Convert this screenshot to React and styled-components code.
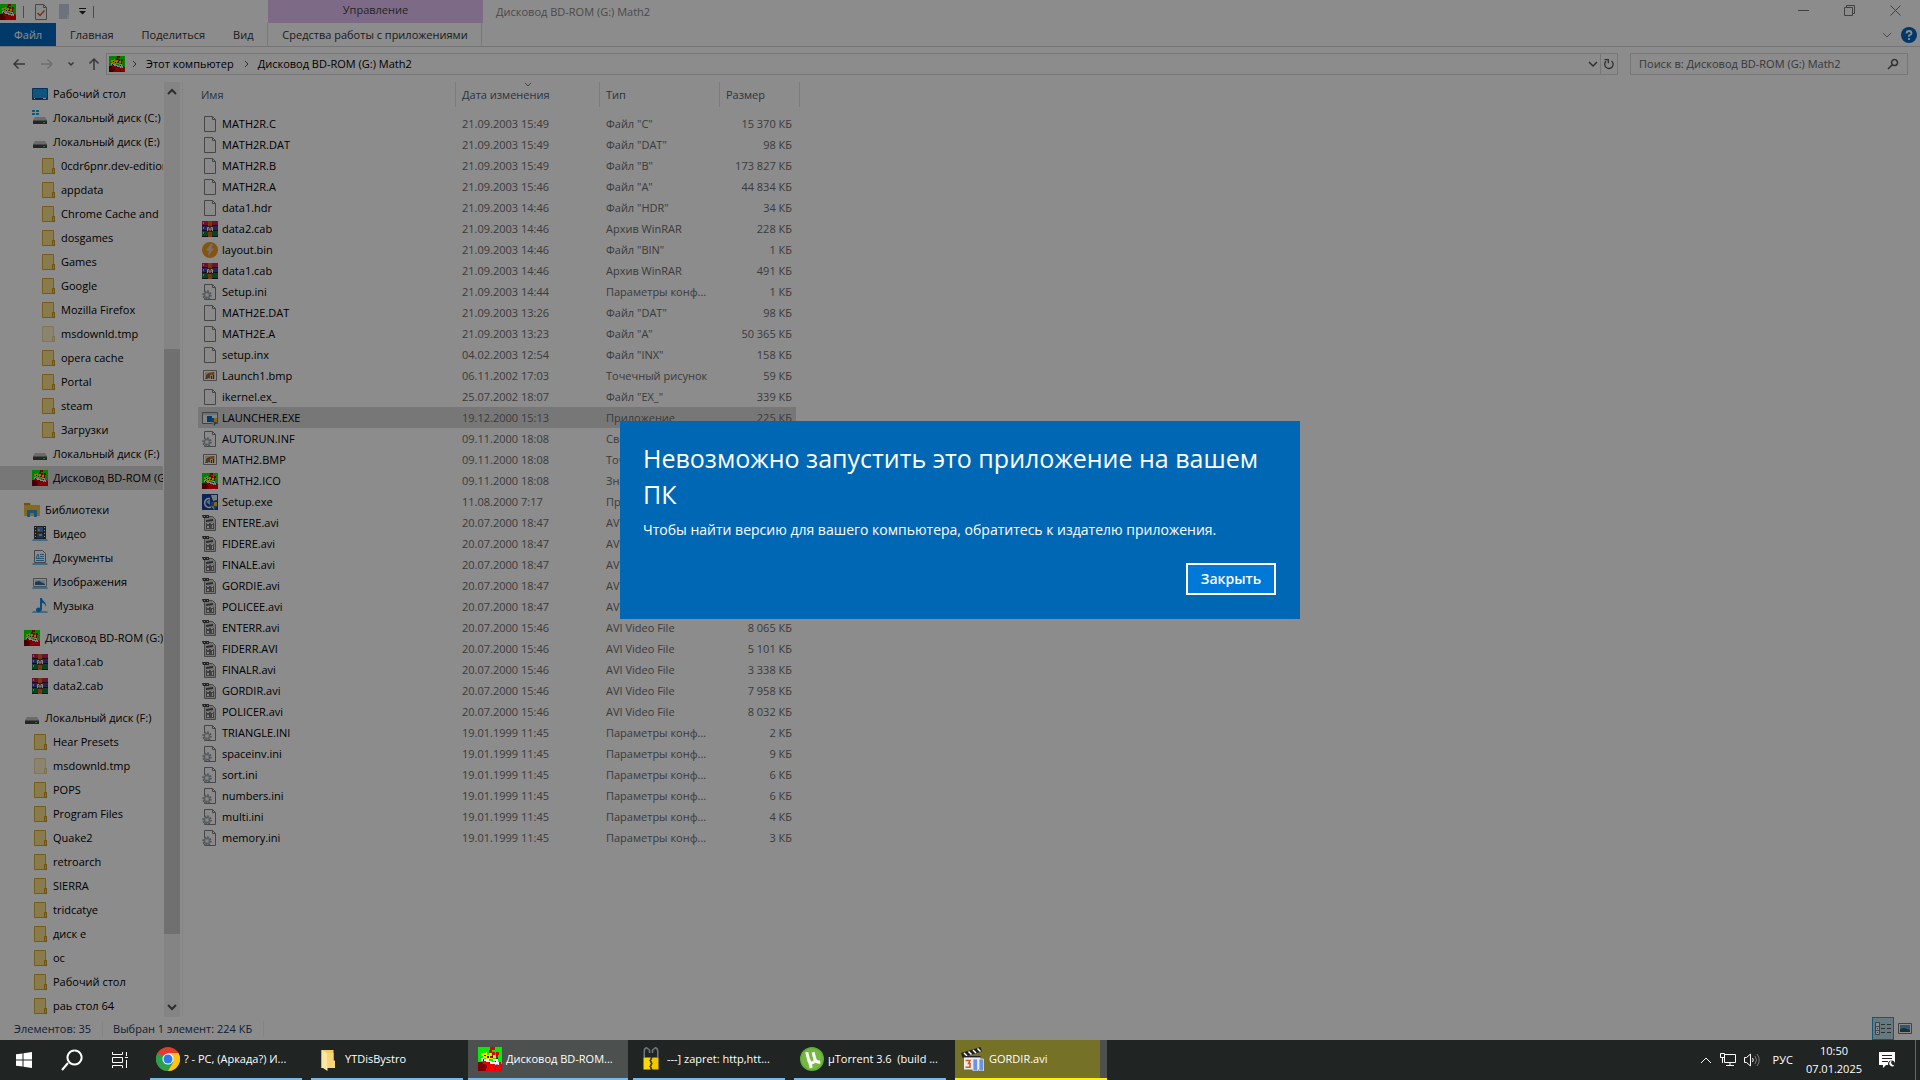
import React, { useState } from "react";
import styled, { createGlobalStyle, css } from "styled-components";

const files = [
  ["MATH2R.C", "21.09.2003 15:49", 'Файл "C"', "15 370 КБ", "file"],
  ["MATH2R.DAT", "21.09.2003 15:49", 'Файл "DAT"', "98 КБ", "file"],
  ["MATH2R.B", "21.09.2003 15:49", 'Файл "B"', "173 827 КБ", "file"],
  ["MATH2R.A", "21.09.2003 15:46", 'Файл "A"', "44 834 КБ", "file"],
  ["data1.hdr", "21.09.2003 14:46", 'Файл "HDR"', "34 КБ", "file"],
  ["data2.cab", "21.09.2003 14:46", "Архив WinRAR", "228 КБ", "rar"],
  ["layout.bin", "21.09.2003 14:46", 'Файл "BIN"', "1 КБ", "bolt"],
  ["data1.cab", "21.09.2003 14:46", "Архив WinRAR", "491 КБ", "rar"],
  ["Setup.ini", "21.09.2003 14:44", "Параметры конф...", "1 КБ", "ini"],
  ["MATH2E.DAT", "21.09.2003 13:26", 'Файл "DAT"', "98 КБ", "file"],
  ["MATH2E.A", "21.09.2003 13:23", 'Файл "A"', "50 365 КБ", "file"],
  ["setup.inx", "04.02.2003 12:54", 'Файл "INX"', "158 КБ", "file"],
  ["Launch1.bmp", "06.11.2002 17:03", "Точечный рисунок", "59 КБ", "bmp"],
  ["ikernel.ex_", "25.07.2002 18:07", 'Файл "EX_"', "339 КБ", "file"],
  ["LAUNCHER.EXE", "19.12.2000 15:13", "Приложение", "225 КБ", "exe"],
  ["AUTORUN.INF", "09.11.2000 18:08", "Сведения для уст...", "1 КБ", "ini"],
  ["MATH2.BMP", "09.11.2000 18:08", "Точечный рисунок", "59 КБ", "bmp"],
  ["MATH2.ICO", "09.11.2000 18:08", "Значок", "1 КБ", "math"],
  ["Setup.exe", "11.08.2000 7:17", "Приложение", "72 КБ", "setup"],
  ["ENTERE.avi", "20.07.2000 18:47", "AVI Video File", "8 065 КБ", "avi"],
  ["FIDERE.avi", "20.07.2000 18:47", "AVI Video File", "5 101 КБ", "avi"],
  ["FINALE.avi", "20.07.2000 18:47", "AVI Video File", "3 338 КБ", "avi"],
  ["GORDIE.avi", "20.07.2000 18:47", "AVI Video File", "7 958 КБ", "avi"],
  ["POLICEE.avi", "20.07.2000 18:47", "AVI Video File", "8 032 КБ", "avi"],
  ["ENTERR.avi", "20.07.2000 15:46", "AVI Video File", "8 065 КБ", "avi"],
  ["FIDERR.AVI", "20.07.2000 15:46", "AVI Video File", "5 101 КБ", "avi"],
  ["FINALR.avi", "20.07.2000 15:46", "AVI Video File", "3 338 КБ", "avi"],
  ["GORDIR.avi", "20.07.2000 15:46", "AVI Video File", "7 958 КБ", "avi"],
  ["POLICER.avi", "20.07.2000 15:46", "AVI Video File", "8 032 КБ", "avi"],
  ["TRIANGLE.INI", "19.01.1999 11:45", "Параметры конф...", "2 КБ", "ini"],
  ["spaceinv.ini", "19.01.1999 11:45", "Параметры конф...", "9 КБ", "ini"],
  ["sort.ini", "19.01.1999 11:45", "Параметры конф...", "6 КБ", "ini"],
  ["numbers.ini", "19.01.1999 11:45", "Параметры конф...", "6 КБ", "ini"],
  ["multi.ini", "19.01.1999 11:45", "Параметры конф...", "4 КБ", "ini"],
  ["memory.ini", "19.01.1999 11:45", "Параметры конф...", "3 КБ", "ini"],
];

// [label, icon, indent, current]
const tree = [
  [
    ["Рабочий стол", "desktop", 32],
    ["Локальный диск (C:)", "sysdrive", 32],
    ["Локальный диск (E:)", "drive", 32],
    ["0cdr6pnr.dev-edition", "folder", 40],
    ["appdata", "folder", 40],
    ["Chrome Cache and", "folder", 40],
    ["dosgames", "folder", 40],
    ["Games", "folder", 40],
    ["Google", "folder", 40],
    ["Mozilla Firefox", "folder", 40],
    ["msdownld.tmp", "faded", 40],
    ["opera cache", "folder", 40],
    ["Portal", "folder", 40],
    ["steam", "folder", 40],
    ["Загрузки", "folder", 40],
    ["Локальный диск (F:)", "drive", 32],
    ["Дисковод BD-ROM (G:)", "math", 32, true],
  ],
  [
    ["Библиотеки", "library", 24],
    ["Видео", "video", 32],
    ["Документы", "docs", 32],
    ["Изображения", "pictures", 32],
    ["Музыка", "music", 32],
  ],
  [
    ["Дисковод BD-ROM (G:)", "math", 24],
    ["data1.cab", "rar", 32],
    ["data2.cab", "rar", 32],
  ],
  [
    ["Локальный диск (F:)", "drive", 24],
    ["Hear Presets", "folder", 32],
    ["msdownld.tmp", "faded", 32],
    ["POPS", "folder", 32],
    ["Program Files", "folder", 32],
    ["Quake2", "folder", 32],
    ["retroarch", "folder", 32],
    ["SIERRA", "folder", 32],
    ["tridcatye", "folder", 32],
    ["диск е", "folder", 32],
    ["ос", "folder", 32],
    ["Рабочий стол", "folder", 32],
    ["раь стол 64", "folder", 32],
  ],
];

const tasks = [
  { label: "? - PC, (Аркада?) И...", icon: "chrome" },
  { label: "YTDisBystro", icon: "taskfolder" },
  { label: "Дисковод BD-ROM...", icon: "math", active: true },
  { label: "---] zapret: http,htt...", icon: "lock" },
  { label: "µTorrent 3.6  (build ...", icon: "utorrent" },
  { label: "GORDIR.avi", icon: "player", alert: true },
];

const folderShape = (
  <>
    <path d="M2.500.5h11v10h1v5h-12z" fill="#fbe08a" stroke="#d9ab2b" />
    <path d="M12.500 15.500v-5h2v5z" fill="#f5cf62" stroke="#c7961c" />
  </>
);

const driveShape = (
  <>
    <path d="M3 7h10l2 3H1z" fill="#c4c4c4" />
    <path d="M1 10h14v4H1z" fill="#444" />
    <path d="M1 10h14v1H1z" fill="#888" />
    <path d="M11 12h2v1h-2z" fill="#3ee04a" />
  </>
);

const pageShape = (
  <path
    d="M2.500.5h8l3 3v12h-11zM10.500.5v3h3"
    fill="#fbfbfb"
    stroke="#808080"
  />
);

const shapes = {
  folder: folderShape,
  faded: <g opacity="0.45">{folderShape}</g>,
  drive: driveShape,
  sysdrive: (
    <>
      {driveShape}
      <path d="M0 0h3v2H0zM4 0h3v2H4zM0 3h3v2H0zM4 3h3v2H4z" fill="#00adef" />
    </>
  ),
  file: pageShape,
  desktop: (
    <>
      <path d="M.5 2.500h15v11H.5z" fill="#1e9be9" stroke="#0a5c9c" />
      <path d="M1 12h14v1H1z" fill="#0b4a80" />
      <path d="M2 12h1v1H2zM11 12h3v1h-3z" fill="#fff" />
    </>
  ),
  math: (
    <g shapeRendering="crispEdges">
      <path d="M0 0h16v16H0z" fill="#00f000" />
      <path d="M1 10h2V9h4v1h4v1h3v-1h1v1h1v5H0v-5h1z" fill="#f00000" />
      <path d="M0 10h3v1h2v1h1v2H5v2H0z" fill="#7c0000" />
      <path d="M8 0h3v2H9v1h2v2h1V3h2v2h-1v2H8V5H7V2h1z" fill="#c80c00" />
      <path d="M2 4h3V3h1v2h2v2h2v1H5V7H3V6H2zM10 5h2v2h-2zM7 4h2v2H7z" fill="#ffe000" />
      <path d="M2 7h2v1h3v1h3v-1h3v2h1v2h-3v-1H8v-1H5V9H2z" fill="#f4f4f4" />
      <path d="M4 5h1v1H4zM6 6h1v1H6zM9 6h1v1H9zM12 7h1v1h-1zM3 8h1v1H3zM7 10h1v1H7zM11 9h1v1h-1z" fill="#222" />
      <path d="M9 9h2v1H9zM12 11h1v1h-1z" fill="#38bce8" />
      <path d="M11 13h1v3h-1z" fill="#9c0000" />
    </g>
  ),
  rar: (
    <>
      <path d="M0 0h16v5H0z" fill="#c5214f" />
      <path d="M0 5h16v5H0z" fill="#4a3fa8" />
      <path d="M0 10h16v6H0z" fill="#107a3c" />
      <path d="M0 4h16v1H0zM0 9h16v1H0zM0 15h16v1H0z" fill="#2b1830" />
      <path d="M6 0h4v16H6z" fill="#d9661c" />
      <path d="M5 5h6v6H5z" fill="#6a2c18" />
      <path d="M5.500 10V6.500h1.500V9h2V6.500h1.500V10" fill="none" stroke="#fff" />
      <path d="M1 1h1v2H1zM1 6h1v2H1zM1 11h1v2H1z" fill="#f0c040" />
    </>
  ),
  bolt: (
    <>
      <circle cx="8" cy="8" r="8" fill="#f39a1e" />
      <path d="M9 1.500L4 8.500h3l-1 5.500 6-7.500H9l2-4z" fill="#d8d0c4" />
    </>
  ),
  ini: (
    <>
      {pageShape}
      <circle cx="5" cy="11" r="4" fill="#e4e6e8" stroke="#8c969c" strokeWidth="1.500" strokeDasharray="1.600 1.500" />
      <circle cx="5" cy="11" r="2.800" fill="#d4d9dc" stroke="#98a0a6" />
      <circle cx="5" cy="11" r="1" fill="#fff" />
    </>
  ),
  bmp: (
    <>
      <path d="M1.500 2.500h13v10h-13z" fill="#fff" stroke="#858585" />
      <path d="M3 4h10v7H3z" fill="#d8d2c0" />
      <path d="M4 7l3-2 5-1v3z" fill="#c8571e" />
      <path d="M4 7h4v3H4z" fill="#94683f" />
      <path d="M8 5h4v2H8z" fill="#dc782a" />
      <path d="M9 8h1v3H9zM11 7h1v4h-1z" fill="#5a3c28" />
      <path d="M3 10h3v1H3z" fill="#5c9440" />
    </>
  ),
  exe: (
    <>
      <path d="M.5 2.500h15v11H.5z" fill="#eef3f7" stroke="#777" />
      <path d="M1 3h14v2H1z" fill="#c5ced6" />
      <path d="M5 6h5v6H5z" fill="#0a66c4" />
      <path d="M9 8h6v4l-3 4-3-4z" fill="#f2bb22" />
      <path d="M9 8h3v4H9zM12 12h3l-3 4z" fill="#1c6fd0" />
    </>
  ),
  setup: (
    <>
      <path d="M0 0h16v16H0z" fill="#17409c" />
      <path d="M9 1h6v5l-4 1z" fill="#d5e2f0" />
      <path d="M8 4.500A4.500 4.500 0 1 0 9 13" fill="none" stroke="#e8f1ff" strokeWidth="1.500" />
      <path d="M4 8l4-3v6z" fill="#9fc0ee" />
      <path d="M9 8h6v4l-3 4-3-4z" fill="#f2bb22" />
      <path d="M9 8h3v4H9zM12 12h3l-3 4z" fill="#1c6fd0" />
    </>
  ),
  avi: (
    <>
      <path d="M2.500 1.500h8l3 3v11h-11z" fill="#d4d4d4" stroke="#808080" />
      <path d="M0 0h7v3H1z" fill="#444" />
      <path d="M2 1h1v1H2zM5 1h1v1H5z" fill="#ddd" />
      <path d="M4 5l7-1v2l-7 1z" fill="#555" />
      <path d="M4 8h8v6H4z" fill="#777" />
      <path d="M5 8h2v1H5zM9 8h2v1H9zM5 11h2v2H5zM10 10h1v3h-1z" fill="#f2f2f2" />
      <path d="M7 9h1v3H7z" fill="#c44" />
      <path d="M9 11h1v3H9z" fill="#4a4" />
      <path d="M11 11h1v3h-1z" fill="#47d" />
    </>
  ),
  library: (
    <>
      <path d="M0 1h6l1 2h9v11H0z" fill="#f2bf3d" />
      <path d="M0 1h6v2H0z" fill="#c8941f" />
      <path d="M3 15V8h10v7h-3v-4H6v4z" fill="#3498db" />
    </>
  ),
  video: (
    <>
      <path d="M2 0h12v13H2z" fill="#36393e" />
      <path d="M5 1h6v5H5z" fill="#3f7ed0" />
      <path d="M5 7h6v5H5z" fill="#2f5fa5" />
      <path d="M6 3h2v2H6zM7 8h3v2H7z" fill="#e0a82c" />
      <path d="M3 1h1v1H3zM3 4h1v1H3zM3 7h1v1H3zM3 10h1v1H3zM12 1h1v1h-1zM12 4h1v1h-1zM12 7h1v1h-1zM12 10h1v1h-1z" fill="#fff" />
      <path d="M1 13h14l1 2H0z" fill="#79c2ee" />
    </>
  ),
  docs: (
    <>
      <path d="M2.500.5h8l3 3v9h-11z" fill="#fff" stroke="#808080" />
      <path d="M4 8l2-4 1 4M8 4.500h4M8 6.500h4M4 8.500h8M4 10.500h8" fill="none" stroke="#4696cf" />
      <path d="M1 13h14l1 2H0z" fill="#79c2ee" />
    </>
  ),
  pictures: (
    <>
      <path d="M1.500 4.500h13v8h-13z" fill="#fff" stroke="#8a8a8a" />
      <path d="M3 6h10v5H3z" fill="#bfe0f4" />
      <path d="M3 8l4-1 6 3v1H3z" fill="#2f6d96" />
      <path d="M1 13h14l1 2H0z" fill="#79c2ee" />
    </>
  ),
  music: (
    <>
      <path d="M1 13h14l1 2H0z" fill="#79c2ee" />
      <path d="M8 0h2c0 3 5 4 4 9-1-3-2-4-4-4v6c0 4-6 4-6 1 0-2 2-3 4-2z" fill="#1587dd" />
    </>
  ),
  chrome: (
    <>
      <circle cx="8" cy="8" r="8" fill="#e33b2e" />
      <path d="M1.070 4A8 8 0 0 0 8 16l3.500-6z" fill="#2aa14c" />
      <path d="M8 16A8 8 0 0 0 14.930 4H8l3.500 6z" fill="#fdc50f" />
      <circle cx="8" cy="8" r="3.700" fill="#fff" />
      <circle cx="8" cy="8" r="3" fill="#2f78ee" />
    </>
  ),
  taskfolder: (
    <>
      <path d="M3 2h8v12H3z" fill="#f3cb63" />
      <path d="M3 2l4 2v12l-3-2H3z" fill="#fbe6a2" />
      <path d="M7 4h4v5h1v5H7z" fill="#f8d675" />
    </>
  ),
  lock: (
    <>
      <path d="M3.500 7V3q0-2 1.500-2.500L7 2v2M12.500 7V3q0-2-1.500-2.500L9 2v2" fill="none" stroke="#6f7880" />
      <path d="M3 7h5l-1 2 1 2-1 2 1 2H3z" fill="#fcd800" />
      <path d="M13 7H9L8 9l1 2-1 2 1 2h4z" fill="#f1c800" />
      <path d="M8.500 7l-1 2 1 2-1 2 1 2" fill="none" stroke="#4a3b00" />
    </>
  ),
  utorrent: (
    <>
      <circle cx="8" cy="8" r="8" fill="#5fae3c" />
      <circle cx="8" cy="8" r="7" fill="#76b83f" />
      <path d="M4.500 3.500l1.500 6q.5 1.500 2.200 1T10 8.500l-1.300-5M10 8q.5 2.500 3.500 2M6 8.500L7.500 14" fill="none" stroke="#fff" strokeWidth="2" />
    </>
  ),
  player: (
    <>
      <path d="M0 4l13-4 1 3-13 4z" fill="#222" />
      <path d="M2 4l2 2M5 3l2 2M8 2l2 2M11 1l2 2" stroke="#fff" />
      <path d="M1 6h12v1H1z" fill="#222" />
      <path d="M2 7h11v8H2z" fill="#eee" />
      <path d="M3 9h3l-1 2h1v2.500H3" fill="none" stroke="#d8541e" />
      <path d="M8 8h3v8H8zM12 8h3v8h-3z" fill="#6d94e4" stroke="#dce6fb" strokeWidth="0.500" />
    </>
  ),
};

const Icon = ({ name, size = 16 }) => (
  <Glyph width={size} height={size} viewBox="0 0 16 16" aria-hidden="true">
    {shapes[name]}
  </Glyph>
);

const Line = ({ d, size = 16, width = 1, label }) => (
  <Glyph
    width={size}
    height={size}
    viewBox={`0 0 ${size} ${size}`}
    fill="none"
    stroke="currentColor"
    strokeWidth={width}
    aria-label={label}
  >
    <path d={d} />
  </Glyph>
);

const Ribbon = () => (
  <>
    <TitleBar>
      <QuickAccess>
        <Icon name="math" />
        <Divider />
        <Glyph width="16" height="16" viewBox="0 0 16 16">
          {pageShape}
          <path d="M4.500 9l2.500 2.500 4.500-5" fill="none" stroke="#e2562a" strokeWidth="1.500" />
        </Glyph>
        <Glyph width="16" height="16" viewBox="0 0 16 16">
          <path d="M3 0h10v15H3z" fill="#c7d0e2" />
          <path d="M11 11h2v4h-2z" fill="#dfe8f5" />
        </Glyph>
        <Glyph width="7" height="7" viewBox="0 0 7 7">
          <path d="M0 0h7v1H0zM0 3h7L3.500 6.500z" fill="#222" />
        </Glyph>
        <Divider />
      </QuickAccess>
      <ContextGroup>Управление</ContextGroup>
      <WindowTitle>Дисковод BD-ROM (G:) Math2</WindowTitle>
      <CaptionButton aria-label="Свернуть"><Line size={11} d="M0 5.500h11" /></CaptionButton>
      <CaptionButton aria-label="Развернуть"><Line size={11} d="M.5 2.500h8v8h-8zM2.500 2.500v-2h8v8h-2" /></CaptionButton>
      <CaptionButton aria-label="Закрыть окно"><Line size={11} d="M.5.5l10 10M10.500.5l-10 10" /></CaptionButton>
    </TitleBar>
    <TabRow>
      <FileTab>Файл</FileTab>
      <Tab>Главная</Tab>
      <Tab>Поделиться</Tab>
      <Tab>Вид</Tab>
      <ContextTab>Средства работы с приложениями</ContextTab>
      <TabTools>
        <Line size={10} d="M1 3l4 4 4-4" />
        <Glyph width="16" height="16" viewBox="0 0 16 16">
          <circle cx="8" cy="8" r="8" fill="#0066c0" />
          <path d="M5.500 6.500q0-2.500 2.500-2.500T10.500 6.500Q10.500 7.500 8 8.500V9.800M8 11v2" fill="none" stroke="#fff" strokeWidth="1.800" />
        </Glyph>
      </TabTools>
    </TabRow>
  </>
);

const AddressRow = () => (
  <NavRow>
    <NavButtons>
      <Line d="M14 8H3M7.500 3.500L3 8l4.500 4.500" width={1.5} label="Назад" />
      <Pale><Line d="M2 8h11M8.500 3.500L13 8l-4.500 4.500" width={1.5} label="Вперед" /></Pale>
      <Line size={8} d="M1.500 2.500L4 5l2.500-2.500" width={1.5} />
      <Line size={14} d="M7 13V2M2.500 6.500L7 2l4.500 4.500" width={1.5} label="Вверх" />
    </NavButtons>
    <AddressBox>
      <Icon name="math" />
      <Line size={8} d="M3 1l3 3-3 3" />
      <Crumb href="#pc">Этот компьютер</Crumb>
      <Line size={8} d="M3 1l3 3-3 3" />
      <Crumb href="#math2">Дисковод BD-ROM (G:) Math2</Crumb>
      <AddressTools>
        <Line size={10} d="M1 3l4 4 4-4" width={1.5} />
        <Refresh aria-label="Обновить">
          <Line size={12} d="M3 3.300a4.200 4.200 0 1 0 5.500-.3M1.500 1.700h3.800v3.500" width={1.3} />
        </Refresh>
      </AddressTools>
    </AddressBox>
    <SearchBox>
      <SearchInput
        aria-label="Поиск"
        placeholder="Поиск в: Дисковод BD-ROM (G:) Math2"
      />
      <Line size={12} d="M1 11l4-4M7.500 1.500a3 3 0 1 0 .1 0" width={1.5} />
    </SearchBox>
  </NavRow>
);

const Sidebar = () => (
  <Side>
    <Tree>
      {tree.map((group, i) => (
        <TreeGroup key={i}>
          {group.map(([label, icon, indent, current]) => (
            <TreeItem key={label} href="#tree" $indent={indent} $current={current}>
              <Icon name={icon} />
              {label}
            </TreeItem>
          ))}
        </TreeGroup>
      ))}
    </Tree>
    <ScrollTrack>
      <Line size={10} d="M1 7l4-4 4 4" width={2} />
      <ScrollThumb />
      <Line size={10} d="M1 3l4 4 4-4" width={2} />
    </ScrollTrack>
  </Side>
);

const FileList = () => (
  <ListPane>
    <Table>
      <colgroup>
        <NameCol />
        <DateCol />
        <TypeCol />
        <SizeCol />
      </colgroup>
      <thead>
        <tr>
          <Th><HeadLabel $first>Имя</HeadLabel></Th>
          <Th>
            <HeadLabel>
              Дата изменения
              <SortMark><Line size={8} d="M1 1l3 3 3-3" /></SortMark>
            </HeadLabel>
          </Th>
          <Th><HeadLabel>Тип</HeadLabel></Th>
          <Th><HeadLabel>Размер</HeadLabel></Th>
        </tr>
      </thead>
      <tbody>
        {files.map(([name, date, type, size, icon]) => (
          <Row key={name} $selected={name === "LAUNCHER.EXE"}>
            <td>
              <FileName>
                <Icon name={icon} />
                {name}
              </FileName>
            </td>
            <Meta>{date}</Meta>
            <Meta>{type}</Meta>
            <SizeCell>{size}</SizeCell>
          </Row>
        ))}
      </tbody>
    </Table>
  </ListPane>
);

const Status = () => (
  <StatusBar>
    <StatusItem>Элементов: 35</StatusItem>
    <StatusItem>Выбран 1 элемент: 224 КБ</StatusItem>
    <ViewModes>
      <ViewButton $on aria-label="Таблица">
        <Glyph width="16" height="14" viewBox="0 0 16 14">
          <path d="M.5.500h4v4h-4zM.5 4.500h4v4h-4zM.5 8.500h4v4h-4z" fill="#fff" stroke="#777" />
          <path d="M6 2.500h4M12 2.500h4M6 6.500h4M12 6.500h4M6 10.500h4M12 10.500h4" stroke="#555" />
          <path d="M2 6h1v1H2z" fill="#36c" />
          <path d="M2 10h1v1H2z" fill="#c22" />
        </Glyph>
      </ViewButton>
      <ViewButton aria-label="Крупные значки">
        <Glyph width="14" height="11" viewBox="0 0 14 11">
          <path d="M.5.500h13v10H.5z" fill="#fff" stroke="#777" />
          <path d="M2 2h10v7H2z" fill="#5b9ddb" />
          <path d="M2 6l4-1 6 2v2H2z" fill="#2d5c50" />
        </Glyph>
      </ViewButton>
    </ViewModes>
  </StatusBar>
);

const Taskbar = () => (
  <Bar>
    <SystemButton aria-label="Пуск">
      <Glyph width="16" height="16" viewBox="0 0 16 16">
        <path d="M0 2.300l6.500-.9v6.100H0zM7.500 1.200L16 0v7.500H7.500zM0 8.500h6.500v6.100L0 13.700zM7.500 8.500H16V16l-8.500-1.200z" fill="#fff" />
      </Glyph>
    </SystemButton>
    <SystemButton aria-label="Поиск в Windows">
      <Line size={22} d="M1 21l6-7M13.500 1.500a7 7 0 1 0 .1 0" width={2} />
    </SystemButton>
    <SystemButton aria-label="Представление задач">
      <Line d="M.5 0v2.500h10V0M.5 5.500h10v5H.5zM.5 16v-2.500h10V16M14.500 0v4M14.500 8v8M13 5.500h3" />
    </SystemButton>
    <Tasks>
      {tasks.map((t) => (
        <Task key={t.label} $active={t.active} $alert={t.alert}>
          <Icon name={t.icon} size={24} />
          {t.label}
        </Task>
      ))}
    </Tasks>
    <Tray>
      <Line size={12} d="M1 9l5-5 5 5" label="Скрытые значки" />
      <Line d="M4.500 2.500h11v8h-11zM10 10.500v3M6 13.500h8M.5 1.500h4v4h-4zM2.500 6v5" label="Сеть" />
      <Glyph width="16" height="16" viewBox="0 0 16 16" fill="none" stroke="#fff">
        <path d="M.5 5.500h2l4-3.500v12l-4-3.500h-2zM8.500 6q1.500 2 0 4" />
        <path d="M11 4q3 4 0 8M13 2q4.500 6 0 12" stroke="#777" />
      </Glyph>
      <Language>РУС</Language>
      <Clock>
        <span>10:50</span>
        <span>07.01.2025</span>
      </Clock>
      <Glyph width="16" height="16" viewBox="0 0 16 16">
        <path d="M0 0h16v13H7l-3 3v-3H0z" fill="#fff" />
        <path d="M3 3.500h10M3 6.500h10M3 9.500h6" stroke="#222" />
        <circle cx="12.500" cy="12" r="3.500" fill="#222" />
        <path d="M13 8.500a3 3 0 1 0 2.500 5 3 3 0 0 1-2.500-5z" fill="#fff" />
      </Glyph>
    </Tray>
  </Bar>
);

const App = () => {
  const [open, setOpen] = useState(true);

  return (
    <Screen>
      <GlobalStyle />
      <Desktop>
        <Ribbon />
        <AddressRow />
        <Content>
          <Sidebar />
          <FileList />
        </Content>
        <Status />
        {open && (
          <Dim>
            <Dialog role="dialog" aria-labelledby="dialog-title">
              <DialogTitle id="dialog-title">
                Невозможно запустить это приложение на вашем ПК
              </DialogTitle>
              <DialogText>
                Чтобы найти версию для вашего компьютера, обратитесь к издателю
                приложения.
              </DialogText>
              <CloseButton onClick={() => setOpen(false)}>Закрыть</CloseButton>
            </Dialog>
          </Dim>
        )}
      </Desktop>
      <Taskbar />
    </Screen>
  );
};

export default App;

const GlobalStyle = createGlobalStyle`
  * {
    box-sizing: border-box;
  }
  body {
    margin: 0;
    font-family: "Open Sans", "Noto Sans", sans-serif;
    font-size: 11px;
    line-height: 16px;
  }
  button, input {
    margin: 0;
    padding: 0;
    border: 0;
    background: none;
    color: inherit;
    font: inherit;
  }
`;

const Glyph = styled.svg`
  display: block;
  flex: none;
`;

const Screen = styled.div`
  display: flex;
  flex-direction: column;
  height: 100vh;
  overflow: hidden;
`;

const Desktop = styled.main`
  position: relative;
  display: flex;
  flex-direction: column;
  flex: 1;
  min-height: 0;
  background: #fff;
`;

const TitleBar = styled.header`
  display: flex;
  height: 23px;
  padding-right: 2px;
`;

const QuickAccess = styled.div`
  display: flex;
  align-items: center;
  gap: 7px;
  width: 268px;
`;

const Divider = styled.span`
  width: 1px;
  height: 12px;
  margin-right: 2px;
  background: #888;
`;

const ContextGroup = styled.div`
  width: 215px;
  padding-top: 2px;
  background: #e4c1f4;
  color: #444;
  text-align: center;
`;

const WindowTitle = styled.div`
  flex: 1;
  padding: 4px 13px;
  color: #888;
`;

const CaptionButton = styled.button`
  display: grid;
  place-items: center;
  width: 46px;
  height: 21px;
  color: #777;
`;

const TabRow = styled.nav`
  display: flex;
  height: 24px;
  border-bottom: 1px solid #d5d6d7;
`;

const Tab = styled.button`
  padding: 0 14px;
  color: #333;
  white-space: nowrap;
`;

const FileTab = styled(Tab)`
  width: 56px;
  background: #0067c0;
  color: #fff;
`;

const ContextTab = styled(Tab)`
  width: 215px;
  padding: 0;
  border: solid #dcdcdc;
  border-width: 0 1px;
`;

const TabTools = styled.div`
  display: flex;
  align-items: center;
  gap: 9px;
  margin-left: auto;
  padding-right: 3px;
  color: #888;
`;

const NavRow = styled.div`
  display: flex;
  padding: 6px 12px 7px 0;
`;

const NavButtons = styled.div`
  display: flex;
  align-items: center;
  gap: 12px;
  width: 106px;
  padding-left: 11px;
  color: #666;
`;

const Pale = styled.span`
  color: #ccc;
`;

const AddressBox = styled.div`
  display: flex;
  align-items: center;
  flex: 1;
  gap: 5px;
  height: 22px;
  margin-right: 12px;
  padding-left: 2px;
  border: 1px solid #d9d9d9;
  color: #555;
`;

const Crumb = styled.a`
  padding: 0 3px;
  color: #000;
  text-decoration: none;
`;

const AddressTools = styled.div`
  display: flex;
  align-items: center;
  gap: 2px;
  height: 20px;
  margin-left: auto;
`;

const Refresh = styled.button`
  display: grid;
  place-items: center;
  width: 17px;
  height: 20px;
  border-left: 1px solid #d9d9d9;
`;

const SearchBox = styled.label`
  display: flex;
  align-items: center;
  width: 278px;
  padding: 0 8px;
  border: 1px solid #d9d9d9;
  color: #555;
`;

const SearchInput = styled.input`
  flex: 1;
  min-width: 0;
  outline: none;

  &::placeholder {
    color: #666;
    opacity: 1;
  }
`;

const Content = styled.div`
  display: flex;
  flex: 1;
  min-height: 0;
`;

const Side = styled.aside`
  display: flex;
  width: 183px;
  border-right: 1px solid #f3f3f3;
`;

const Tree = styled.nav`
  width: 164px;
  overflow: hidden;
  padding-right: 1px;
`;

const TreeGroup = styled.div`
  margin-bottom: 8px;
`;

const TreeItem = styled.a`
  display: flex;
  align-items: center;
  gap: 5px;
  height: 24px;
  padding-left: ${(props) => props.$indent}px;
  overflow: hidden;
  background: ${(props) => (props.$current ? "#d9d9d9" : "none")};
  color: #000;
  text-decoration: none;
  white-space: nowrap;
`;

const ScrollTrack = styled.div`
  display: flex;
  flex-direction: column;
  align-items: center;
  width: 16px;
  padding: 5px 0;
  background: #f0f0f0;
  color: #505050;
`;

const ScrollThumb = styled.div`
  flex: 0 0 585px;
  width: 100%;
  margin: auto 0 68px;
  background: #cdcdcd;
`;

const ListPane = styled.section`
  flex: 1;
  padding-left: 15px;
  overflow: hidden;
`;

const Table = styled.table`
  width: 602px;
  table-layout: fixed;
  border-collapse: separate;
  border-spacing: 0;

  td {
    padding: 0;
  }
`;

const NameCol = styled.col`
  width: 258px;
`;
const DateCol = styled.col`
  width: 144px;
`;
const TypeCol = styled.col`
  width: 120px;
`;
const SizeCol = styled.col`
  width: 80px;
`;

const Th = styled.th`
  height: 31px;
  padding: 0;
  vertical-align: top;
  font-weight: 400;
`;

const HeadLabel = styled.button`
  position: relative;
  display: block;
  width: 100%;
  height: 25px;
  padding-left: ${(props) => (props.$first ? 3 : 6)}px;
  border-right: 1px solid #e2e2e2;
  color: #4c607a;
  text-align: left;
`;

const SortMark = styled.span`
  position: absolute;
  top: 0;
  left: 50%;
  margin-left: -4px;
  color: #777;
`;

const Row = styled.tr`
  height: 21px;

  ${(props) =>
    props.$selected &&
    css`
      td {
        background: #d9d9d9;
      }
    `}
`;

const FileName = styled.span`
  display: flex;
  align-items: center;
  gap: 4px;
  padding-left: 4px;
  color: #000;
`;

const Meta = styled.td`
  && {
    padding-left: 6px;
  }
  color: #6d6d6d;
  white-space: nowrap;
`;

const SizeCell = styled(Meta)`
  && {
    padding-right: 4px;
    border-right: 4px solid transparent;
    background-clip: padding-box;
  }
  text-align: right;
`;

const StatusBar = styled.footer`
  display: flex;
  align-items: center;
  height: 23px;
  padding-left: 14px;
  color: #1e395b;
`;

const StatusItem = styled.span`
  margin-right: 10px;
  padding-right: 11px;
  border-right: 1px solid #f0f0f0;
`;

const ViewModes = styled.div`
  display: flex;
  margin-left: auto;
  padding-right: 4px;
`;

const ViewButton = styled.button`
  display: grid;
  place-items: center;
  width: 22px;
  height: 23px;

  ${(props) =>
    props.$on &&
    css`
      border: 1px solid #2a9fd8;
      background: #b8dcea;
    `}
`;

const Dim = styled.div`
  position: absolute;
  inset: 0;
  display: grid;
  place-items: center;
  background: rgba(0, 0, 0, 0.45);
`;

const Dialog = styled.section`
  display: flex;
  flex-direction: column;
  width: 680px;
  padding: 19px 24px 24px 23px;
  background: #0067b4;
  color: #fff;
`;

const DialogTitle = styled.h1`
  margin: 0;
  font-size: 25px;
  font-weight: 400;
  line-height: 36px;
`;

const DialogText = styled.p`
  margin: 7px 0 22px;
  font-size: 14px;
  line-height: 22px;
`;

const CloseButton = styled.button`
  align-self: flex-end;
  width: 90px;
  height: 32px;
  border: 2px solid #fff;
  background: #0078d7;
  font-size: 14px;
  font-weight: 600;
`;

const Bar = styled.footer`
  display: flex;
  height: 40px;
  background: #202423;
  color: #fff;
`;

const SystemButton = styled.button`
  display: grid;
  place-items: center;
  width: 48px;
`;

const Tasks = styled.div`
  display: flex;
  flex: 1;
  gap: 9px;
  padding-left: 6px;
`;

const Task = styled.button`
  display: flex;
  align-items: center;
  gap: 4px;
  width: 152px;
  padding: 0 6px;
  border-bottom: 2px solid #76b9ed;
  white-space: pre;

  ${(props) =>
    props.$active &&
    css`
      width: 160px;
      margin: 0 -4px;
      padding: 0 10px;
      background: #4c504e;
    `}

  ${(props) =>
    props.$alert &&
    css`
      border-color: #fff100;
      background: linear-gradient(90deg, #757127 145px, #4c504e 145px);
    `}
`;

const Tray = styled.div`
  display: flex;
  align-items: center;
  gap: 8px;
  margin-right: 4px;
  padding-right: 20px;
  border-right: 1px solid #666;
`;

const Language = styled.span`
  margin: 0 5px;
`;

const Clock = styled.div`
  display: flex;
  flex-direction: column;
  align-items: center;
  margin-right: 9px;
  line-height: 18px;
`;
